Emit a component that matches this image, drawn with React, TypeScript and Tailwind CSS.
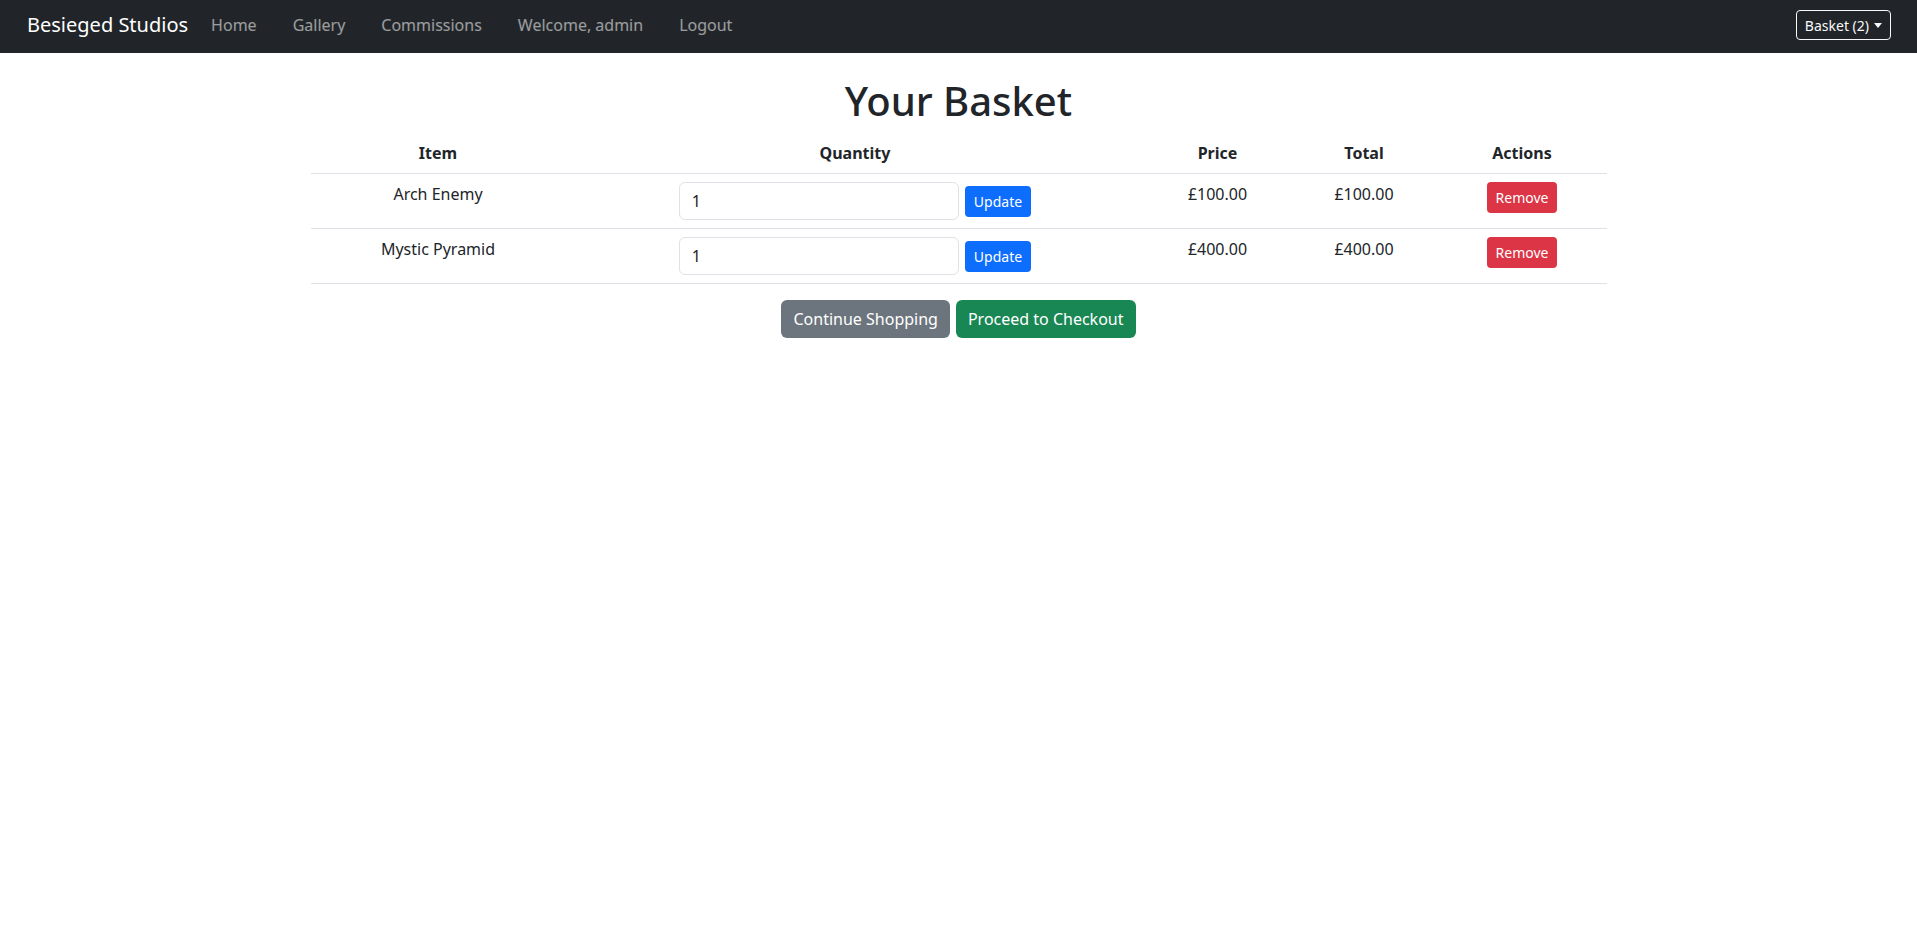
import { useState } from 'react';

type Item = { id: number; name: string; price: number; qty: number };

const initialItems: Item[] = [
  { id: 1, name: 'Arch Enemy', price: 100, qty: 1 },
  { id: 2, name: 'Mystic Pyramid', price: 400, qty: 1 },
];

const fmt = (n: number) => `£${n.toFixed(2)}`;

function Navbar({ count }: { count: number }) {
  return (
    <nav className="h-[53px] bg-[#212529] flex items-center justify-between pl-[27px] pr-[26px] pb-[3px]">
      <div className="flex items-center">
        <a href="#" className="text-[20px] leading-[30px] text-white mr-[23px]">Besieged Studios</a>
        <div className="flex items-center gap-[36px] text-[16px] leading-[24px] text-white/55">
          <a href="#" className="hover:text-white/75">Home</a>
          <a href="#" className="hover:text-white/75">Gallery</a>
          <a href="#" className="hover:text-white/75">Commissions</a>
          <a href="#" className="hover:text-white/75">Welcome, admin</a>
          <a href="#" className="hover:text-white/75">Logout</a>
        </div>
      </div>
      <button className="flex items-center h-[30px] px-[8px] rounded-[4px] border border-[#f8f9fa] text-[#f8f9fa] text-[14px] leading-[21px]">
        Basket ({count})
        <span className="ml-[5px] w-0 h-0 border-x-[4px] border-x-transparent border-t-[5px] border-t-[#f8f9fa]" />
      </button>
    </nav>
  );
}

export default function App() {
  const [items, setItems] = useState(initialItems);

  const remove = (id: number) => setItems(items.filter((i) => i.id !== id));

  return (
    <div className="min-h-screen bg-white text-[#212529] font-['Noto_Sans','Liberation_Sans',sans-serif]">
      <Navbar count={items.length} />

      <div className="w-[1320px] mx-auto px-[12px] mt-[24px]">
        <h1 className="text-center text-[40px] leading-[48px] font-medium mb-[8px]">Your Basket</h1>

        <table className="w-full table-fixed border-collapse text-center text-[16px] leading-[24px] mb-[16px]">
          <colgroup>
            <col className="w-[255px]" />
            <col className="w-[579px]" />
            <col className="w-[146px]" />
            <col className="w-[147px]" />
            <col className="w-[169px]" />
          </colgroup>
          <thead>
            <tr className="border-b border-[#dee2e6]">
              <th className="p-[8px] font-bold">Item</th>
              <th className="p-[8px] font-bold">Quantity</th>
              <th className="p-[8px] font-bold">Price</th>
              <th className="p-[8px] font-bold">Total</th>
              <th className="p-[8px] font-bold">Actions</th>
            </tr>
          </thead>
          <tbody>
            {items.map((item) => (
              <tr key={item.id} className="border-b border-[#dee2e6] align-top">
                <td className="p-[8px]">{item.name}</td>
                <td className="p-[8px]">
                  <div className="flex items-center justify-center gap-[6px]">
                    <input
                      type="number"
                      defaultValue={item.qty}
                      className="w-[280px] h-[38px] px-[12px] border border-[#dee2e6] rounded-[6px] text-[16px] outline-none"
                    />
                    <button className="h-[31px] px-[9px] rounded-[4px] bg-[#0d6efd] text-white text-[14px] leading-[21px]">Update</button>
                  </div>
                </td>
                <td className="p-[8px]">{fmt(item.price)}</td>
                <td className="p-[8px]">{fmt(item.price * item.qty)}</td>
                <td className="p-[8px]">
                  <button
                    onClick={() => remove(item.id)}
                    className="h-[31px] px-[9px] rounded-[4px] bg-[#dc3545] text-white text-[14px] leading-[21px]"
                  >
                    Remove
                  </button>
                </td>
              </tr>
            ))}
          </tbody>
        </table>

        <div className="flex justify-center gap-[6px]">
          <button className="h-[38px] px-[12px] rounded-[6px] bg-[#6c757d] text-white text-[16px]">Continue Shopping</button>
          <button className="h-[38px] px-[12px] rounded-[6px] bg-[#198754] text-white text-[16px]">Proceed to Checkout</button>
        </div>
      </div>
    </div>
  );
}
